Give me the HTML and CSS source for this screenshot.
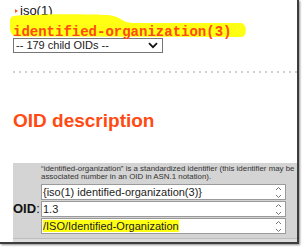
FILE: index.html
```html
<!DOCTYPE html>
<html>
<head>
<meta charset="utf-8">
<link rel="stylesheet" href="styles.css">
</head>
<body>
<div class="frame">
  <div class="page">
    <div class="crumb"><span class="tri"></span><a class="crumb-link" href="#">iso(1)</a></div>
    <div class="oidname">
      <svg class="hl" width="240" height="26" viewBox="0 0 240 26"><path d="M3,2 C30,-0.5 80,0 98,1 C108,2 112,6 116,8 C120,9 125,9 130,9 L231,9 C237,9 238,23 231,23 L8,22.5 C1,22 0,18 0,12 C0,6 0,3 3,2 Z" fill="#ffff14"/></svg>
      <span class="oidtext">identified-organization(3)</span>
    </div>
    <div class="select"><span class="sel-text">-- 179 child OIDs --</span><svg class="chev" width="10" height="7" viewBox="0 0 10 7"><path d="M1,1.2 L5,5.2 L9,1.2" fill="none" stroke="#111" stroke-width="1.7"/></svg></div>
    <div class="dots"></div>
    <h1 class="title">OID description</h1>
    <div class="panel">
      <div class="panel-main">
        <div class="label-col"><span class="lbl"><b>OID</b>:</span></div>
        <div class="content-col">
          <p class="desc">“identified-organization” is a standardized identifier (this identifier may be associated number in an OID in ASN.1 notation).</p>
          <div class="field"><span class="ftext">{iso(1) identified-organization(3)}</span><span class="spin"><svg width="7" height="13" viewBox="0 0 7 13"><path d="M1,4 L3.5,1.5 L6,4 M1,9 L3.5,11.5 L6,9" fill="none" stroke="#777" stroke-width="1"/></svg></span></div>
          <div class="field"><span class="ftext">1.3</span><span class="spin"><svg width="7" height="13" viewBox="0 0 7 13"><path d="M1,4 L3.5,1.5 L6,4 M1,9 L3.5,11.5 L6,9" fill="none" stroke="#777" stroke-width="1"/></svg></span></div>
          <div class="field"><span class="ftext"><span class="mark">/ISO/Identified-Organization</span></span><span class="spin"><svg width="7" height="13" viewBox="0 0 7 13"><path d="M1,4 L3.5,1.5 L6,4 M1,9 L3.5,11.5 L6,9" fill="none" stroke="#777" stroke-width="1"/></svg></span></div>
        </div>
      </div>
      <div class="panel-next"></div>
    </div>
  </div>
</div>
</body>
</html>
```
FILE: styles.css
```css
html, body {
  margin: 0;
  padding: 0;
  background: #fff;
}
body {
  font-family: "Liberation Sans", Arial, sans-serif;
  width: 304px;
  height: 248px;
  overflow: hidden;
}
.frame {
  width: 297px;
  height: 242px;
  border-right: 2px solid #3c3c3c;
  border-bottom: 2px solid #3c3c3c;
  box-shadow: 1px 1px 2px rgba(0,0,0,0.45);
  overflow: hidden;
  background: #fff;
}
.page {
  padding: 3px 0 0 13px;
}
.crumb {
  display: flex;
  align-items: center;
  height: 15px;
  font-size: 13px;
  line-height: 15px;
}
.tri {
  display: inline-block;
  width: 0;
  height: 0;
  margin: 1px 2px 0 2px;
  border-left: 3px solid #ff5a1a;
  border-top: 2.5px solid transparent;
  border-bottom: 2.5px solid transparent;
}
.crumb-link {
  color: #111;
  text-decoration: underline;
}
.oidname {
  position: relative;
  margin-top: 4px;
  height: 16px;
}
.hl {
  position: absolute;
  left: -3px;
  top: -8px;
  z-index: 0;
}
.oidtext {
  position: relative;
  z-index: 1;
  font-family: "Liberation Mono", "Courier New", monospace;
  font-weight: bold;
  font-size: 14px;
  line-height: 16px;
  color: #ff4a12;
}
.select {
  box-sizing: border-box;
  width: 150px;
  height: 15px;
  border: 1px solid #767676;
  display: flex;
  align-items: center;
  justify-content: space-between;
  padding: 0 4px 0 2px;
  font-size: 11px;
  color: #222;
}
.sel-text {
  line-height: 13px;
}
.dots {
  margin-top: 18px;
  height: 2px;
  background: repeating-linear-gradient(to right, #cfcfcf 0, #cfcfcf 2px, transparent 2px, transparent 6px);
}
.title {
  margin: 37px 0 0 0;
  font-size: 19px;
  line-height: 22px;
  font-weight: bold;
  color: #ff4a12;
}
.panel {
  margin-top: 31px;
  background: #d4d4d4;
}
.panel-main {
  display: flex;
  padding-bottom: 4px;
}
.label-col {
  width: 28px;
  display: flex;
  align-items: flex-end;
  padding-bottom: 17px;
}
.lbl {
  font-size: 13px;
  line-height: 16px;
  color: #111;
}
.lbl b {
  font-weight: bold;
}
.content-col {
  width: 245px;
  display: flex;
  flex-direction: column;
  gap: 1px;
}
.desc {
  margin: 2px 0 2px 0;
  font-size: 7.9px;
  line-height: 8px;
  color: #333;
  white-space: normal;
  width: 270px;
}
.field {
  box-sizing: border-box;
  height: 16px;
  background: #fff;
  border: 1px solid #9a9a9a;
  display: flex;
  align-items: center;
  justify-content: space-between;
  padding: 0 3px 0 1px;
  font-size: 11px;
  color: #222;
}
.ftext {
  line-height: 13px;
}
.mark {
  background: #ffff14;
}
.spin {
  display: flex;
  align-items: center;
}
.panel-next {
  border-top: 1px solid #bdbdbd;
  height: 8px;
  background: #dcdcdc;
}
```
